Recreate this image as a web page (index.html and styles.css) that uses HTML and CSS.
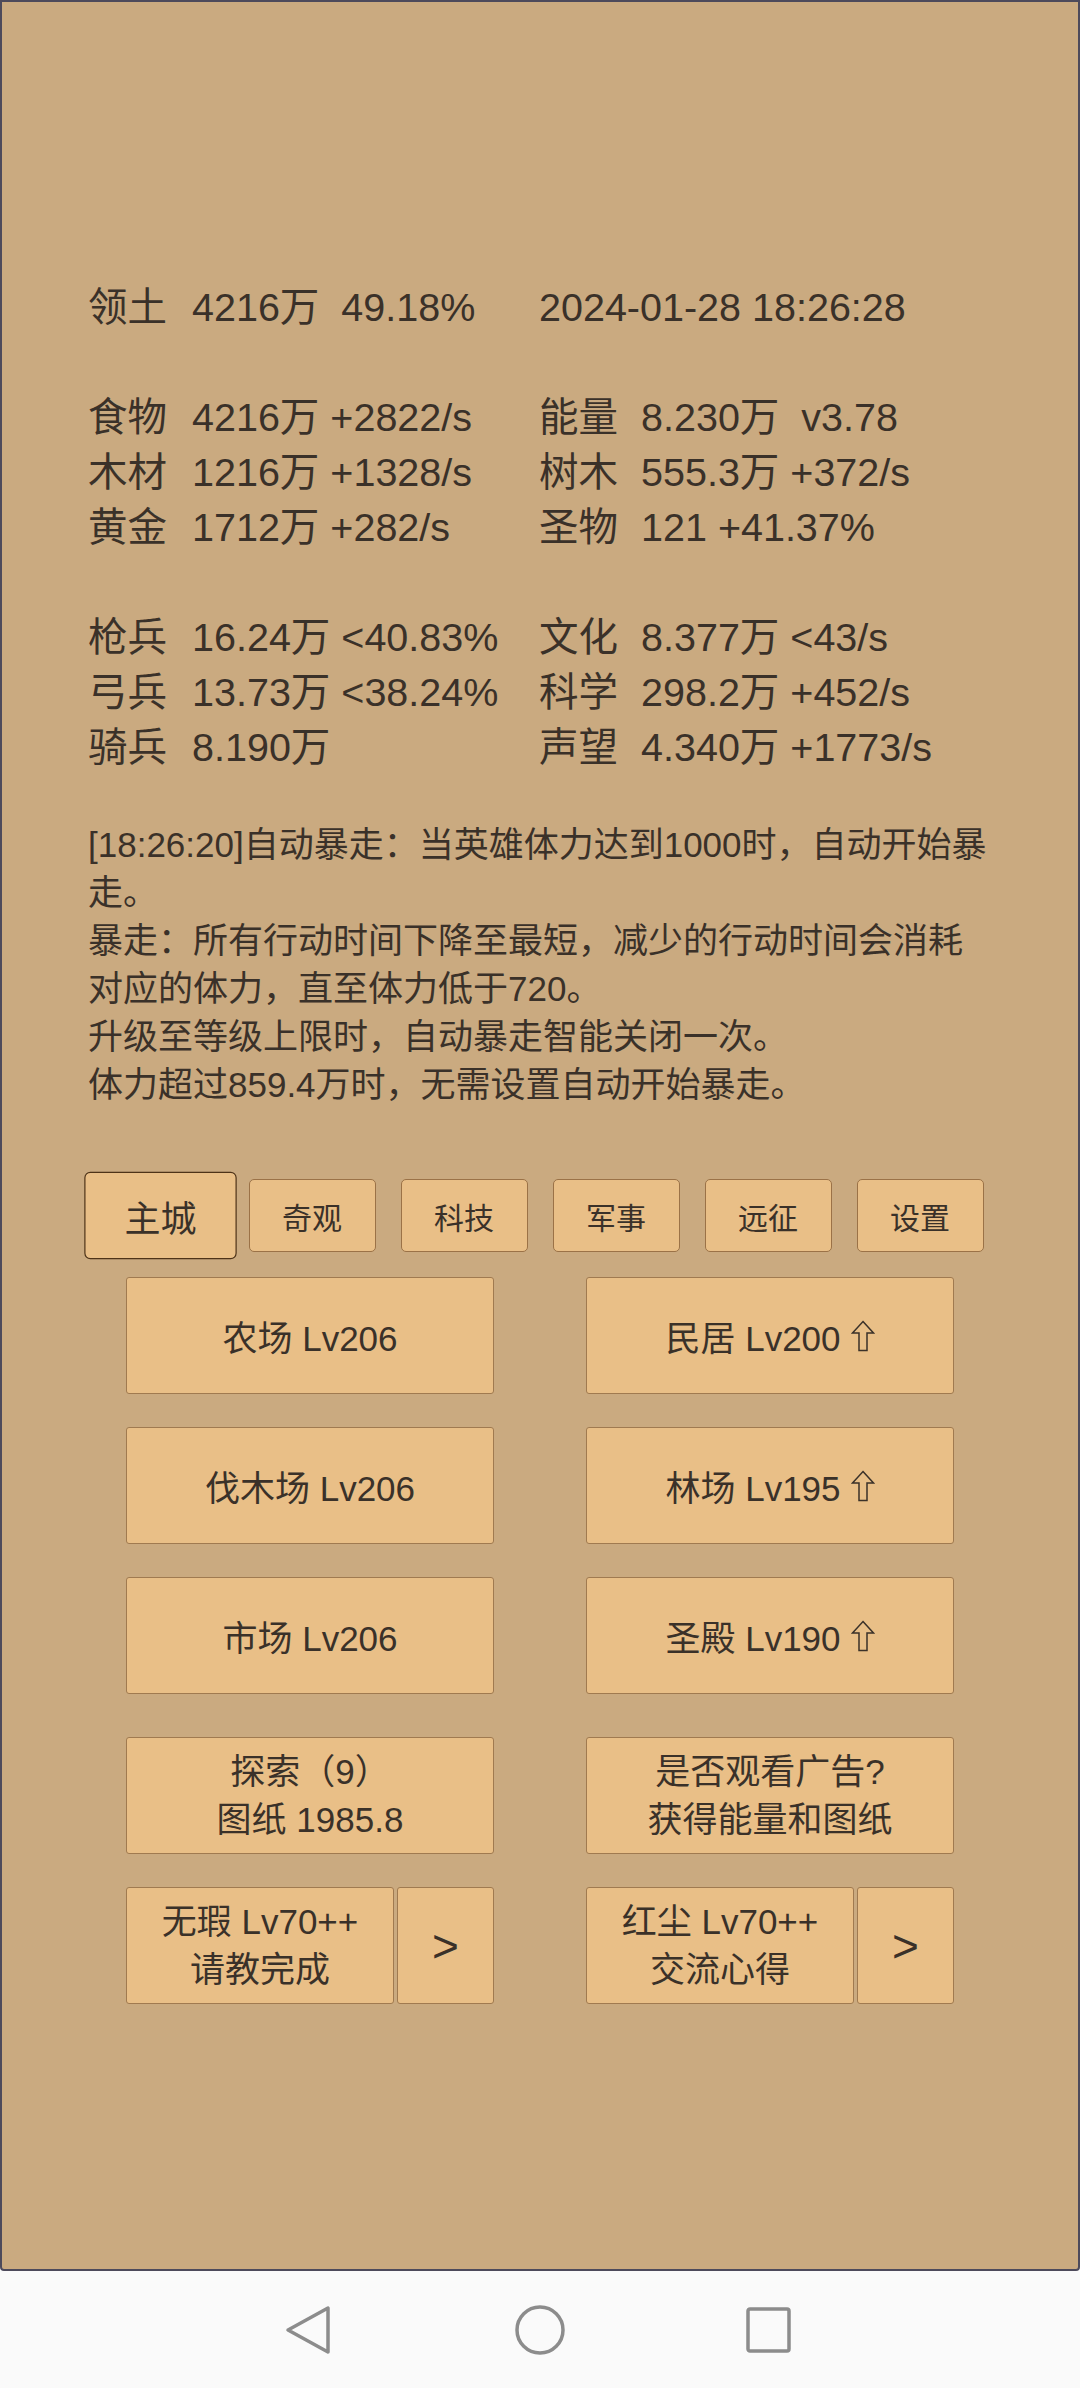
FILE: index.html
```html
<!DOCTYPE html>
<html>

<head>
  <link rel="stylesheet" href="styles.css">
</head>

<body>
  <div class="screen">
    <div class="stats">
      <span>领土</span><span>4216万  49.18%</span><span class="wide">2024-01-28 18:26:28</span>
      <div class="blank"></div>
      <span>食物</span><span>4216万 +2822/s</span><span>能量</span><span>8.230万  v3.78</span>
      <span>木材</span><span>1216万 +1328/s</span><span>树木</span><span>555.3万 +372/s</span>
      <span>黄金</span><span>1712万 +282/s</span><span>圣物</span><span>121 +41.37%</span>
      <div class="blank"></div>
      <span>枪兵</span><span>16.24万 &lt;40.83%</span><span>文化</span><span>8.377万 &lt;43/s</span>
      <span>弓兵</span><span>13.73万 &lt;38.24%</span><span>科学</span><span>298.2万 +452/s</span>
      <span>骑兵</span><span>8.190万</span><span>声望</span><span>4.340万 +1773/s</span>
    </div>

    <div class="log">
      [18:26:20]自动暴走：当英雄体力达到1000时，自动开始暴<br>
      走。<br>
      暴走：所有行动时间下降至最短，减少的行动时间会消耗<br>
      对应的体力，直至体力低于720。<br>
      升级至等级上限时，自动暴走智能关闭一次。<br>
      体力超过859.4万时，无需设置自动开始暴走。
    </div>

    <div class="tabs">
      <button class="tab active">主城</button>
      <button class="tab">奇观</button>
      <button class="tab">科技</button>
      <button class="tab">军事</button>
      <button class="tab">远征</button>
      <button class="tab">设置</button>
    </div>

    <div class="buildings">
      <div class="row">
        <button class="build">农场 Lv206</button>
        <button class="build">民居 Lv200<svg class="up" viewBox="0 0 24 32"><path d="M12 1.5 L22.5 13 L16 13 L16 30.5 L8 30.5 L8 13 L1.5 13 Z"/></svg></button>
      </div>
      <div class="row">
        <button class="build">伐木场 Lv206</button>
        <button class="build">林场 Lv195<svg class="up" viewBox="0 0 24 32"><path d="M12 1.5 L22.5 13 L16 13 L16 30.5 L8 30.5 L8 13 L1.5 13 Z"/></svg></button>
      </div>
      <div class="row">
        <button class="build">市场 Lv206</button>
        <button class="build">圣殿 Lv190<svg class="up" viewBox="0 0 24 32"><path d="M12 1.5 L22.5 13 L16 13 L16 30.5 L8 30.5 L8 13 L1.5 13 Z"/></svg></button>
      </div>
      <div class="row extra">
        <button class="build two">探索（9）<br>图纸 1985.8</button>
        <button class="build two">是否观看广告?<br>获得能量和图纸</button>
      </div>
      <div class="row">
        <div class="pair">
          <button class="build two main">无瑕 Lv70++<br>请教完成</button>
          <button class="build next">&gt;</button>
        </div>
        <div class="pair">
          <button class="build two main">红尘 Lv70++<br>交流心得</button>
          <button class="build next">&gt;</button>
        </div>
      </div>
    </div>
  </div>

  <div class="navbar">
    <svg class="nav-back" viewBox="0 0 46 50"><path d="M43 3 L43 47 L3 25 Z"/></svg>
    <svg class="nav-home" viewBox="0 0 50 50"><circle cx="25" cy="25" r="23"/></svg>
    <svg class="nav-recent" viewBox="0 0 45 46"><rect x="2" y="2" width="41" height="42" rx="2"/></svg>
  </div>
</body>

</html>
```

FILE: styles.css
```css
body {
  margin: 0;
  background-color: #fafafa;
  font-family: "Liberation Sans", "Noto Sans CJK SC", sans-serif;
  color: #3a3129;
}

.screen {
  box-sizing: border-box;
  height: 2271px;
  background-color: #caaa80;
  border: 2px solid #4d4a5b;
  border-radius: 0 0 4px 4px;
  padding-top: 278px;
}

/* 资源信息 */
.stats {
  margin-left: 86px;
  display: grid;
  grid-template-columns: 104px 347px 102px auto;
  grid-auto-rows: 55px;
  font-size: 39.5px;
  line-height: 55px;
  white-space: pre;
}

.stats .wide {
  grid-column: 3 / 5;
}

.stats .blank {
  grid-column: 1 / 5;
}

/* 日志 */
.log {
  margin: 46px 0 0 86px;
  font-size: 35px;
  line-height: 48px;
  white-space: nowrap;
}

/* 标签页 */
.tabs {
  display: flex;
  justify-content: center;
  gap: 25px;
  margin-top: 70px;
}

.tab {
  width: 127px;
  height: 73px;
  padding: 0;
  background-color: #e9bf87;
  border: 1.5px solid #9b7247;
  border-radius: 5px;
  font-family: inherit;
  font-size: 30px;
  color: #3a3129;
}

.tab.active {
  transform: scale(1.2);
  border-color: #4e3318;
}

/* 建筑按钮 */
.buildings {
  display: flex;
  flex-direction: column;
  align-items: center;
  gap: 33px;
  margin-top: 25px;
}

.row {
  display: flex;
  gap: 92px;
}

.row.extra {
  margin-top: 10px;
}

.build {
  display: flex;
  justify-content: center;
  align-items: center;
  width: 368px;
  height: 117px;
  padding: 0;
  background-color: #e9bf87;
  border: 1.5px solid #a07a50;
  border-radius: 3px;
  font-family: inherit;
  font-size: 35px;
  color: #3a3129;
}

.build.two {
  line-height: 48px;
}

.pair {
  display: flex;
  gap: 3px;
}

.build.main {
  width: 268px;
}

.build.next {
  width: 97px;
  font-size: 46px;
}

.up {
  width: 24px;
  height: 32px;
  margin-left: 10px;
  fill: none;
  stroke: #3a3129;
  stroke-width: 1.5;
}

/* 导航栏 */
.navbar {
  height: 117px;
  display: flex;
  align-items: center;
  padding-left: 285px;
}

.navbar svg {
  fill: none;
  stroke: #8c8c8c;
  stroke-width: 3.5;
  stroke-linejoin: round;
}

.nav-back {
  width: 46px;
  height: 50px;
}

.nav-home {
  width: 50px;
  height: 50px;
  margin-left: 184px;
}

.nav-recent {
  width: 45px;
  height: 46px;
  margin-left: 181px;
}
```
